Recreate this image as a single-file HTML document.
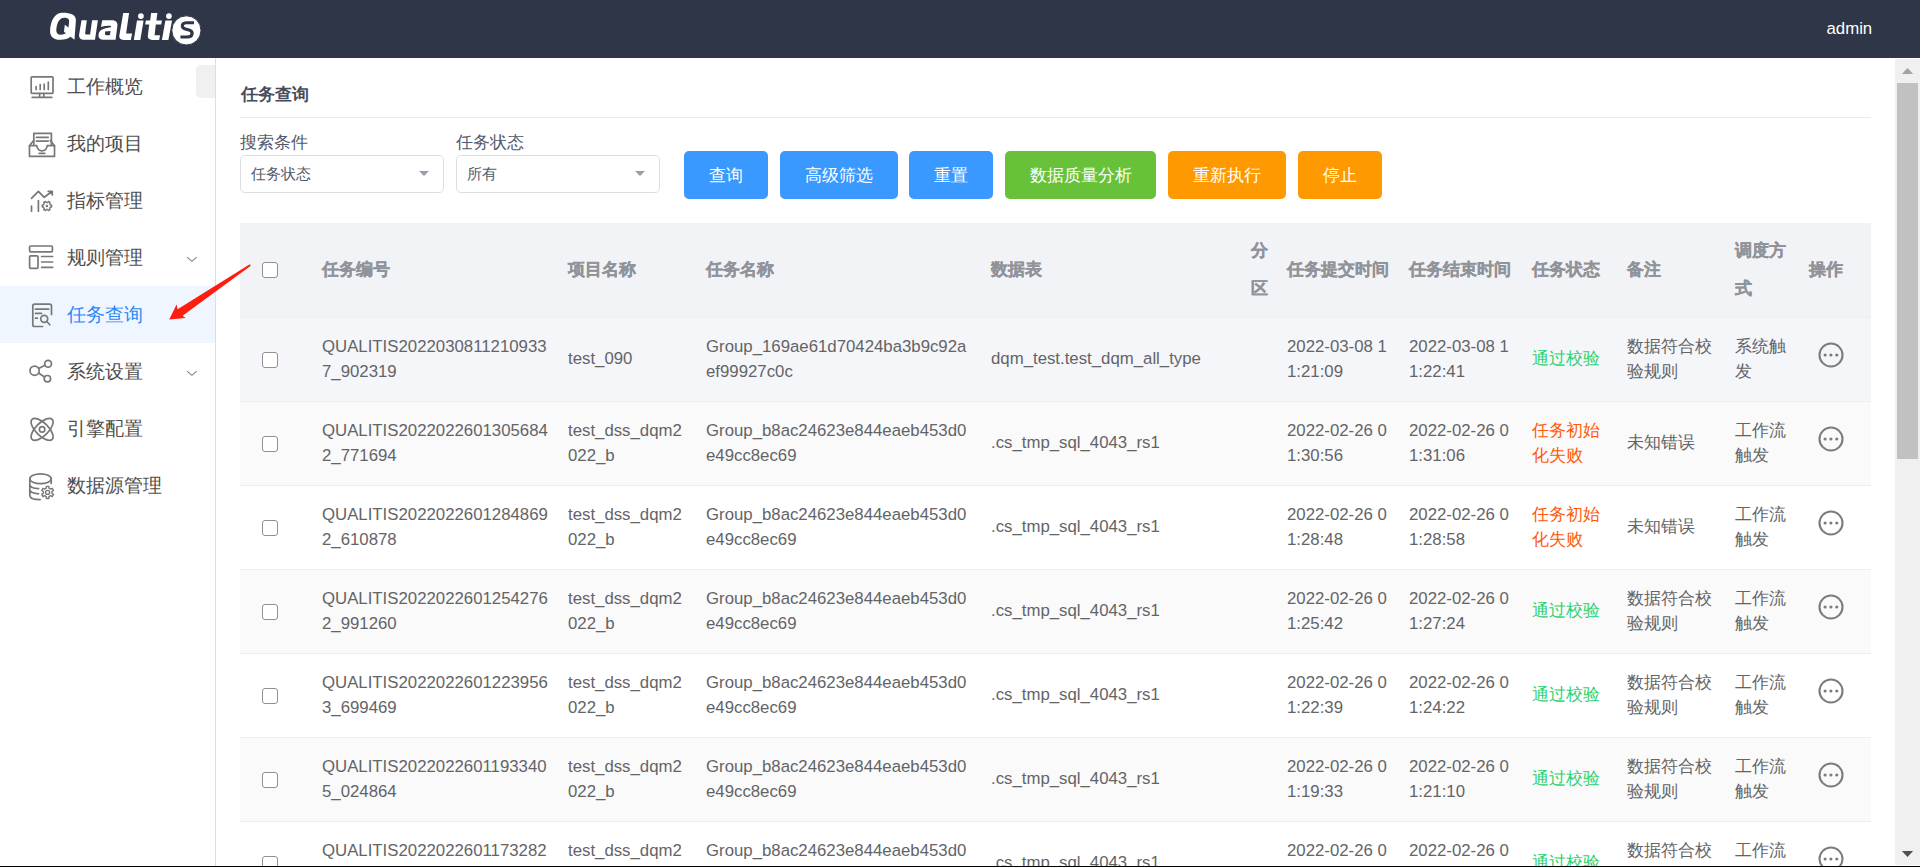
<!DOCTYPE html>
<html><head><meta charset="utf-8">
<style>
*{box-sizing:border-box;margin:0;padding:0}
html,body{width:1920px;height:867px;overflow:hidden;background:#fff;font-family:"Liberation Sans",sans-serif;}
#hdr{position:absolute;left:0;top:0;width:1920px;height:57.6px;background:#2e3647;}

#admin{position:absolute;left:1826.5px;top:17.5px;color:#fff;font:16.8px/22px "Liberation Sans",sans-serif}
#side{position:absolute;left:0;top:57.6px;width:216px;height:810px;border-right:1px solid #dcdee2;background:#fff}
.mi{position:absolute;left:0;width:215px;height:56.6px;color:#4e4e4e;font-size:19.4px;line-height:57px}
.mi .tx{position:absolute;left:67.2px;top:0}
.mi svg{position:absolute}
.mi.act{background:#f0f6ff;color:#2a88f5}

#gbox{position:absolute;left:196px;top:7.4px;width:19px;height:33px;background:#f0f0f0;border-radius:5px 0 0 5px}
#main{position:absolute;left:216px;top:57.6px;width:1679px;height:809px;overflow:hidden}
#title{position:absolute;left:24.5px;top:26.5px;font-weight:bold;font-size:16.8px;line-height:22px;color:#464c5b}
#tline{position:absolute;left:24px;top:59px;width:1631px;height:1px;background:#e8eaec}
.lbl{position:absolute;top:73px;font-size:17.3px;line-height:22px;color:#515a6e}
.sel{position:absolute;top:97.5px;width:204px;height:37.5px;border:1px solid #dcdee2;border-radius:4.8px;font-size:14.6px;line-height:36px;color:#515a6e;padding-left:10px}
.sel i{position:absolute;left:178px;top:15px;width:0;height:0;border-left:5.5px solid transparent;border-right:5.5px solid transparent;border-top:5.5px solid #959eac}
.btn{position:absolute;top:93.4px;height:48px;border-radius:5px;color:#fff;font-size:17.4px;line-height:49px;text-align:center}
.b1{background:#3a99fe}.b2{background:#67c23a}.b3{background:#ff9900}
#tbl{position:absolute;left:24px;top:165.4px;width:1631px;border-collapse:collapse;table-layout:fixed}
#tbl th{background:#f2f3f7;color:#909399;font-weight:bold;-webkit-text-stroke:0.3px #909399;font-size:16.8px;line-height:38.4px;padding:0 10px;height:95px;text-align:left;border-bottom:1px solid #ebeef5;word-break:break-all;vertical-align:middle}
#tbl td{color:#636467;font-size:16.8px;line-height:25.2px;padding:0 10px 2px 10px;height:84px;border-bottom:1px solid #ebeef5;word-break:break-all;vertical-align:middle}
#tbl tr.h td{background:#f5f6fa}
#tbl tr.s td{background:#fafafa}
.cb{display:block;width:16px;height:16px;border:1px solid #909090;border-radius:3px;background:#fff;position:relative}
#tbl td .cb{top:1px}
#tbl td.c0,#tbl th.c0{padding-left:22px;padding-right:0}
#tbl td.ok{color:#2fd171}#tbl td.err{color:#ff5a0a}
.ops{display:block;margin-left:9px;position:relative;top:-3.5px}
#sb{position:absolute;left:1895px;top:59px;width:25px;height:806px;background:#f0f0f0}
#thumb{position:absolute;left:2px;top:24px;width:21px;height:376px;background:#c1c1c1}
#bline{position:absolute;left:0;top:866px;width:1920px;height:1px;background:#000}
</style></head><body>
<div id="hdr">
  <svg style="position:absolute;left:0;top:0" width="215" height="58" viewBox="0 0 215 58">
  <g fill="#fff">
  <path fill-rule="evenodd" d="M62.5 12.8C70.5 12.8 76.3 15 75.9 20.5L74.5 39.8L70.5 36.8C68.4 38.9 65 39.8 60.3 39.8C53.5 39.8 50 36.5 50.1 31C50.3 20.5 55 12.8 62.5 12.8ZM64.4 17.7C67.6 17.7 69.4 19 69.1 21.9L68.5 27.4L64.8 24.8L63.9 32L66 33.1C64.7 34.3 62.8 34.8 60.6 34.8C57.8 34.8 56.1 33 56.3 29.8C56.8 22.5 59.6 17.7 64.4 17.7Z"/>
  <path d="M81.5 20.2L86.8 20.2L85.2 32.8C85 34.1 85.6 34.6 86.8 34.6L90.1 34.6L92.1 20.2L97.9 20.2L95 39.8L84.2 39.8C80.6 39.8 78.8 37.8 79.1 34.8Z"/>
  <path fill-rule="evenodd" d="M102.2 20.2L112.3 20.2C115.9 20.2 117.8 22.5 117.4 25.8L115.6 39.8L103.5 39.8C100 39.8 98.3 38 98.5 35.2C98.8 30.5 102.5 28.3 110.9 27.3L111.2 26C108 25.5 104.2 26 101 26.9ZM105.1 31.6L110.6 31.1L109.8 35.2L106.6 35.2C105.3 35.2 104.8 34.5 105 33.5Z"/>
  <path d="M123.2 12.9L129.1 12.9L126.1 33.5L132.1 33.5L130.9 39.9L123.6 39.9C120.6 39.9 119 38.2 119.3 35.8Z"/>
  <circle cx="140.9" cy="16.1" r="2.9"/>
  <path d="M137 20.4L143.6 20.4L140.3 39.9L133.8 39.9Z"/>
  <path d="M151.1 12.9L157.4 12.9L156.4 20.4L161.9 20.4L161.2 24.6L155.8 24.6L154.6 35.2L160 35.2L159.2 39.9L152.2 39.9C149.2 39.9 147.6 38.1 147.8 36L149.2 24.6L145.2 24.6L145.9 20.4L150.2 20.4Z"/>
  <circle cx="168.9" cy="16.1" r="2.9"/>
  <path d="M165.4 20.4L172 20.4L168.4 39.9L161.9 39.9Z"/>
  <circle cx="186.4" cy="30.4" r="14.6" stroke="#2e3647" stroke-width="1"/>
  </g>
  <path d="M194 22.75L186.2 22.75C183.3 22.75 181.9 24.6 182.4 26.6C182.9 28.6 185.3 29.2 188 29.7C190.9 30.3 192.3 31.6 192.1 33.6C191.9 35.8 189.9 37 187 37L180.4 37" fill="none" stroke="#2e3647" stroke-width="3.2"/>
</svg>
  <div id="admin">admin</div>
</div>
<div id="side">
  <div class="mi" style="top:0.5px"><span class="tx">工作概览</span></div>
  <div class="mi" style="top:57.5px"><span class="tx">我的项目</span></div>
  <div class="mi" style="top:114.5px"><span class="tx">指标管理</span></div>
  <div class="mi" style="top:171.5px"><span class="tx">规则管理</span></div>
  <div class="mi act" style="top:228.5px"><span class="tx">任务查询</span></div>
  <div class="mi" style="top:285.5px"><span class="tx">系统设置</span></div>
  <div class="mi" style="top:342.5px"><span class="tx">引擎配置</span></div>
  <div class="mi" style="top:399.5px"><span class="tx">数据源管理</span></div>
  <div id="gbox"></div>
</div>
<svg id="icons" style="position:absolute;left:0;top:0" width="215" height="520" viewBox="0 0 215 520" fill="none" stroke="#787878" stroke-width="1.7" stroke-linecap="round" stroke-linejoin="round">
  <!-- monitor -->
  <rect x="31.2" y="76.8" width="21.8" height="16.6" rx="0.8"/>
  <path d="M36.1 89.5v-3M40.2 89.5v-5M44.2 89.5v-5.5M48.3 89.5v-7.5M39.6 93.6v3.6M43.8 93.6v3.6M32.2 97.4h19.6"/>
  <!-- inbox -->
  <path d="M33.8 144.5V133.3h17.6v11.2"/>
  <path d="M36.4 137.4h11.8M36.4 141.1h11.8"/>
  <path d="M33.8 140.3l-4.3 5.4v10.7h25v-10.7l-4.3-5.4"/>
  <path d="M29.5 145.7h7.2c0.6 3.2 2.6 5.2 5.3 5.2s4.7-2 5.3-5.2h7.2"/>
  <path d="M39.2 153.3h5.6"/>
  <!-- metrics -->
  <path d="M31.5 198.4l6.9-7.1 5.8 6 8.1-6M48.2 191.3h4.1v3.7"/>
  <path d="M31.5 206.2v5M38.4 200.5v10.7"/>
  <path d="M50.35 204.98 L51.60 205.00 L51.60 207.00 L50.35 207.02 L49.51 208.48 L50.11 209.57 L48.38 210.57 L47.74 209.50 L46.06 209.50 L45.42 210.57 L43.69 209.57 L44.29 208.48 L43.45 207.02 L42.20 207.00 L42.20 205.00 L43.45 204.98 L44.29 203.52 L43.69 202.43 L45.42 201.43 L46.06 202.50 L47.74 202.50 L48.38 201.43 L50.11 202.43 L49.51 203.52Z" stroke-width="1.4"/>
  <circle cx="46.9" cy="206.0" r="1.3" fill="#787878" stroke="none"/>
  <!-- rules -->
  <rect x="29.6" y="246" width="22.8" height="5.8" rx="1"/>
  <rect x="29.6" y="255.8" width="8.4" height="12.5" rx="1"/>
  <path d="M41.6 256.5h11M41.6 262h11M41.6 267.4h11"/>
  <!-- task query -->
  <path d="M51.5 314.5V306a1.8 1.8 0 0 0-1.8-1.8H34.6a1.8 1.8 0 0 0-1.8 1.8v18.7a1.8 1.8 0 0 0 1.8 1.8h8"/>
  <path d="M35.5 309.2h13.2M35.5 313.4h6M35.5 318.2h1.8"/>
  <circle cx="44.2" cy="318.8" r="3.5"/>
  <path d="M46.8 321.5l3 3.3"/>
  <!-- share -->
  <circle cx="34.6" cy="370.7" r="4.6"/>
  <circle cx="48.1" cy="363.8" r="3.4"/>
  <circle cx="47.4" cy="378.7" r="3.2"/>
  <path d="M38.6 368.5l6.4-3.2M38.6 373l5.9 4"/>
  <!-- engine/atom -->
  <ellipse cx="42.1" cy="429.4" rx="14.2" ry="6.3" transform="rotate(45 42.1 429.4)"/>
  <ellipse cx="42.1" cy="429.4" rx="14.2" ry="6.3" transform="rotate(-45 42.1 429.4)"/>
  <circle cx="42.1" cy="429.4" r="2.7"/>
  <!-- datasource -->
  <ellipse cx="40.5" cy="478.7" rx="10.7" ry="4.9"/>
  <path d="M29.8 478.7v16.5c0 2.6 4.2 4.4 10.3 4.5M51.2 478.7v4.6M29.8 484.5c0 2.3 3.6 3.9 8.8 4.2M29.8 489.6c0 2.3 3.6 3.9 8.8 4.2"/>
  <path d="M46.32 488.09 L46.31 486.34 L48.89 486.34 L48.88 488.09 L50.70 489.14 L52.21 488.25 L53.50 490.48 L51.98 491.35 L51.98 493.45 L53.50 494.32 L52.21 496.55 L50.70 495.66 L48.88 496.71 L48.89 498.46 L46.31 498.46 L46.32 496.71 L44.50 495.66 L42.99 496.55 L41.70 494.32 L43.22 493.45 L43.22 491.35 L41.70 490.48 L42.99 488.25 L44.50 489.14Z" stroke-width="1.4"/>
  <circle cx="47.6" cy="492.4" r="2.0" stroke-width="1.4"/>
  <!-- chevrons -->
  <path d="M187.4 257.3l4.5 4 4.5-4M187.4 371.3l4.5 4 4.5-4" stroke="#808695" stroke-width="1.1"/>
</svg>
<div id="main">
  <div id="title">任务查询</div>
  <div id="tline"></div>
  <div class="lbl" style="left:24px">搜索条件</div>
  <div class="sel" style="left:24px">任务状态<i></i></div>
  <div class="lbl" style="left:240px">任务状态</div>
  <div class="sel" style="left:240px">所有<i></i></div>
  <div class="btn b1" style="left:468px;width:84px">查询</div>
  <div class="btn b1" style="left:564px;width:117.5px">高级筛选</div>
  <div class="btn b1" style="left:693px;width:84px">重置</div>
  <div class="btn b2" style="left:789px;width:151px">数据质量分析</div>
  <div class="btn b3" style="left:952px;width:118px">重新执行</div>
  <div class="btn b3" style="left:1082px;width:84px">停止</div>
  <table id="tbl">
    <colgroup><col style="width:72px"><col style="width:246px"><col style="width:138px"><col style="width:285px"><col style="width:260px"><col style="width:36px"><col style="width:122px"><col style="width:123px"><col style="width:95px"><col style="width:108px"><col style="width:74px"><col style="width:72px"></colgroup>
    <thead><tr><th class="c0"><span class="cb"></span></th><th>任务编号</th><th>项目名称</th><th>任务名称</th><th>数据表</th><th>分区</th><th>任务提交时间</th><th>任务结束时间</th><th>任务状态</th><th>备注</th><th>调度方式</th><th>操作</th></tr></thead>
    <tbody id="tb">
<tr class="h"><td class="c0"><span class="cb"></span></td><td>QUALITIS20220308112109337_902319</td><td>test_090</td><td>Group_169ae61d70424ba3b9c92aef99927c0c</td><td>dqm_test.test_dqm_all_type</td><td></td><td>2022-03-08 11:21:09</td><td>2022-03-08 11:22:41</td><td class="ok">通过校验</td><td>数据符合校验规则</td><td>系统触发</td><td><svg class="ops" width="26" height="26" viewBox="0 0 26 26"><circle cx="13" cy="13" r="11.5" fill="none" stroke="#7c7c7c" stroke-width="2.1"/><circle cx="7.1" cy="13" r="1.6" fill="#7c7c7c"/><circle cx="12.9" cy="13" r="1.6" fill="#7c7c7c"/><circle cx="18.8" cy="13" r="1.6" fill="#7c7c7c"/></svg></td></tr>
<tr class="s"><td class="c0"><span class="cb"></span></td><td>QUALITIS20220226013056842_771694</td><td>test_dss_dqm2022_b</td><td>Group_b8ac24623e844eaeb453d0e49cc8ec69</td><td>.cs_tmp_sql_4043_rs1</td><td></td><td>2022-02-26 01:30:56</td><td>2022-02-26 01:31:06</td><td class="err">任务初始化失败</td><td>未知错误</td><td>工作流触发</td><td><svg class="ops" width="26" height="26" viewBox="0 0 26 26"><circle cx="13" cy="13" r="11.5" fill="none" stroke="#7c7c7c" stroke-width="2.1"/><circle cx="7.1" cy="13" r="1.6" fill="#7c7c7c"/><circle cx="12.9" cy="13" r="1.6" fill="#7c7c7c"/><circle cx="18.8" cy="13" r="1.6" fill="#7c7c7c"/></svg></td></tr>
<tr class="w"><td class="c0"><span class="cb"></span></td><td>QUALITIS20220226012848692_610878</td><td>test_dss_dqm2022_b</td><td>Group_b8ac24623e844eaeb453d0e49cc8ec69</td><td>.cs_tmp_sql_4043_rs1</td><td></td><td>2022-02-26 01:28:48</td><td>2022-02-26 01:28:58</td><td class="err">任务初始化失败</td><td>未知错误</td><td>工作流触发</td><td><svg class="ops" width="26" height="26" viewBox="0 0 26 26"><circle cx="13" cy="13" r="11.5" fill="none" stroke="#7c7c7c" stroke-width="2.1"/><circle cx="7.1" cy="13" r="1.6" fill="#7c7c7c"/><circle cx="12.9" cy="13" r="1.6" fill="#7c7c7c"/><circle cx="18.8" cy="13" r="1.6" fill="#7c7c7c"/></svg></td></tr>
<tr class="s"><td class="c0"><span class="cb"></span></td><td>QUALITIS20220226012542762_991260</td><td>test_dss_dqm2022_b</td><td>Group_b8ac24623e844eaeb453d0e49cc8ec69</td><td>.cs_tmp_sql_4043_rs1</td><td></td><td>2022-02-26 01:25:42</td><td>2022-02-26 01:27:24</td><td class="ok">通过校验</td><td>数据符合校验规则</td><td>工作流触发</td><td><svg class="ops" width="26" height="26" viewBox="0 0 26 26"><circle cx="13" cy="13" r="11.5" fill="none" stroke="#7c7c7c" stroke-width="2.1"/><circle cx="7.1" cy="13" r="1.6" fill="#7c7c7c"/><circle cx="12.9" cy="13" r="1.6" fill="#7c7c7c"/><circle cx="18.8" cy="13" r="1.6" fill="#7c7c7c"/></svg></td></tr>
<tr class="w"><td class="c0"><span class="cb"></span></td><td>QUALITIS20220226012239563_699469</td><td>test_dss_dqm2022_b</td><td>Group_b8ac24623e844eaeb453d0e49cc8ec69</td><td>.cs_tmp_sql_4043_rs1</td><td></td><td>2022-02-26 01:22:39</td><td>2022-02-26 01:24:22</td><td class="ok">通过校验</td><td>数据符合校验规则</td><td>工作流触发</td><td><svg class="ops" width="26" height="26" viewBox="0 0 26 26"><circle cx="13" cy="13" r="11.5" fill="none" stroke="#7c7c7c" stroke-width="2.1"/><circle cx="7.1" cy="13" r="1.6" fill="#7c7c7c"/><circle cx="12.9" cy="13" r="1.6" fill="#7c7c7c"/><circle cx="18.8" cy="13" r="1.6" fill="#7c7c7c"/></svg></td></tr>
<tr class="s"><td class="c0"><span class="cb"></span></td><td>QUALITIS20220226011933405_024864</td><td>test_dss_dqm2022_b</td><td>Group_b8ac24623e844eaeb453d0e49cc8ec69</td><td>.cs_tmp_sql_4043_rs1</td><td></td><td>2022-02-26 01:19:33</td><td>2022-02-26 01:21:10</td><td class="ok">通过校验</td><td>数据符合校验规则</td><td>工作流触发</td><td><svg class="ops" width="26" height="26" viewBox="0 0 26 26"><circle cx="13" cy="13" r="11.5" fill="none" stroke="#7c7c7c" stroke-width="2.1"/><circle cx="7.1" cy="13" r="1.6" fill="#7c7c7c"/><circle cx="12.9" cy="13" r="1.6" fill="#7c7c7c"/><circle cx="18.8" cy="13" r="1.6" fill="#7c7c7c"/></svg></td></tr>
<tr class="w"><td class="c0"><span class="cb"></span></td><td>QUALITIS20220226011732822_000000</td><td>test_dss_dqm2022_b</td><td>Group_b8ac24623e844eaeb453d0e49cc8ec69</td><td>.cs_tmp_sql_4043_rs1</td><td></td><td>2022-02-26 01:17:32</td><td>2022-02-26 01:19:10</td><td class="ok">通过校验</td><td>数据符合校验规则</td><td>工作流触发</td><td><svg class="ops" width="26" height="26" viewBox="0 0 26 26"><circle cx="13" cy="13" r="11.5" fill="none" stroke="#7c7c7c" stroke-width="2.1"/><circle cx="7.1" cy="13" r="1.6" fill="#7c7c7c"/><circle cx="12.9" cy="13" r="1.6" fill="#7c7c7c"/><circle cx="18.8" cy="13" r="1.6" fill="#7c7c7c"/></svg></td></tr>
</tbody>
  </table>
</div>
<div id="sb"><div id="thumb"></div><svg style="position:absolute;left:0;top:0" width="25" height="806" viewBox="0 0 25 806"><path d="M6.9 14.9L12.5 8.9L18.1 14.9Z" fill="#a3a3a3"/><path d="M6.9 792L18.1 792L12.5 798Z" fill="#505050"/></svg></div>
<svg style="position:absolute;left:0;top:0" width="300" height="340" viewBox="0 0 300 340"><path d="M249.4 264.5C250.3 264.2 251 265.2 250.5 265.9L182.6 315.7L185.6 317.9L169.2 319.6L176.6 304.4L177.6 309.3Z" fill="#ff1d10"/></svg>
<div id="bline"></div>
</body></html>
